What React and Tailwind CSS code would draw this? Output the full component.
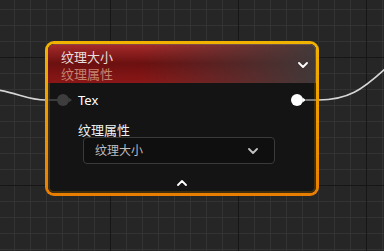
import React from "react";

const font = "font-['Noto_Sans','Noto_Sans_CJK_SC',sans-serif]";

function ChevronDown({ className = "", color = "#ffffff" }) {
  return (
    <svg width="10" height="6" viewBox="0 0 10 6" className={className}>
      <path d="M1 1 L5 5 L9 1" fill="none" stroke={color} strokeWidth="1.8" strokeLinecap="round" strokeLinejoin="round" />
    </svg>
  );
}

function ChevronUp({ className = "" }) {
  return (
    <svg width="10" height="6" viewBox="0 0 10 6" className={className}>
      <path d="M1 5 L5 1 L9 5" fill="none" stroke="#ffffff" strokeWidth="1.8" strokeLinecap="round" strokeLinejoin="round" />
    </svg>
  );
}

function Wires() {
  return (
    <svg width="384" height="251" className="absolute inset-0">
      <path d="M-2 90 C18 93 28 100 46 100" fill="none" stroke="#d6d6d6" strokeWidth="1.6" />
      <path d="M318 100 C348 100 362 90 386 68" fill="none" stroke="#d6d6d6" strokeWidth="1.6" />
    </svg>
  );
}

function TextureNode() {
  return (
    <div className={`absolute left-[45px] top-[41px] w-[274px] h-[155px] rounded-[9px] p-[3px] bg-[linear-gradient(to_bottom,#f2b300,#e97e00)] ${font}`}>
      <div className="h-full w-full rounded-[6px] overflow-hidden bg-[#131413] shadow-[inset_0_0_0_2px_rgba(62,46,14,1)] flex flex-col">
        {/* header */}
        <div className="h-[39px] shrink-0 flex justify-between border-t border-r border-[#8a7a68]/50 rounded-t-[6px] bg-[linear-gradient(to_right,rgba(60,56,56,0)_35%,rgba(62,58,58,0.95)_100%),linear-gradient(to_bottom,#a52a2a_0%,#6c1010_48%,#8b1717_100%)]">
          <div className="pl-[13px] pt-[4px] flex flex-col">
            <span className="text-[13px] leading-[17px] text-[#e6dede]">纹理大小</span>
            <span className="text-[13px] leading-[17px] text-[#c4836f]">纹理属性</span>
          </div>
          <div className="self-center pr-[7px] pt-[1px]">
            <ChevronDown />
          </div>
        </div>

        {/* pin row */}
        <div className="mt-[7px] h-[20px] flex items-center justify-between">
          <div className="flex items-center">
            <svg width="26" height="14" viewBox="0 0 26 14">
              <line x1="0" y1="7" x2="10" y2="7" stroke="#4a4a4a" strokeWidth="1.5" />
              <circle cx="15" cy="7" r="6" fill="#3d3d3d" />
              <path d="M20.5 4.5 L24 7 L20.5 9.5 Z" fill="#3d3d3d" />
            </svg>
            <span className="ml-[4px] text-[13px] leading-[16px] text-white">Tex</span>
          </div>
          <svg width="27" height="14" viewBox="0 0 27 14">
            <circle cx="8" cy="7" r="6" fill="#ffffff" />
            <path d="M13.5 4.5 L17 7 L13.5 9.5 Z" fill="#ffffff" />
            <line x1="17" y1="7" x2="27" y2="7" stroke="#9a9a9a" strokeWidth="1.5" />
          </svg>
        </div>

        {/* property */}
        <span className="mt-[13px] pl-[30px] text-[13px] leading-[14px] text-[#f0f0f0]">纹理属性</span>
        <div className="ml-[35px] w-[192px] h-[27px] rounded-[4px] border border-[#3a3a3a] bg-[#0f0f0f] flex items-center justify-between pl-[11px] pr-[16px]">
          <span className="text-[12px] leading-[14px] text-[#bdbdbd]">纹理大小</span>
          <ChevronDown color="#c4c4c4" />
        </div>

        <div className="mt-[16px] flex justify-center">
          <ChevronUp />
        </div>
      </div>
    </div>
  );
}

export default function App() {
  return (
    <div className="relative w-[384px] h-[251px] overflow-hidden bg-[#262626] bg-[linear-gradient(to_right,#161616_1px,transparent_1px),linear-gradient(to_bottom,#161616_1px,transparent_1px),linear-gradient(to_right,#333333_1px,transparent_1px),linear-gradient(to_bottom,#333333_1px,transparent_1px)] bg-[size:128px_128px,128px_128px,16px_16px,16px_16px] bg-[position:110px_57px,110px_57px,14px_9px,14px_9px]">
      <Wires />
      <TextureNode />
    </div>
  );
}
